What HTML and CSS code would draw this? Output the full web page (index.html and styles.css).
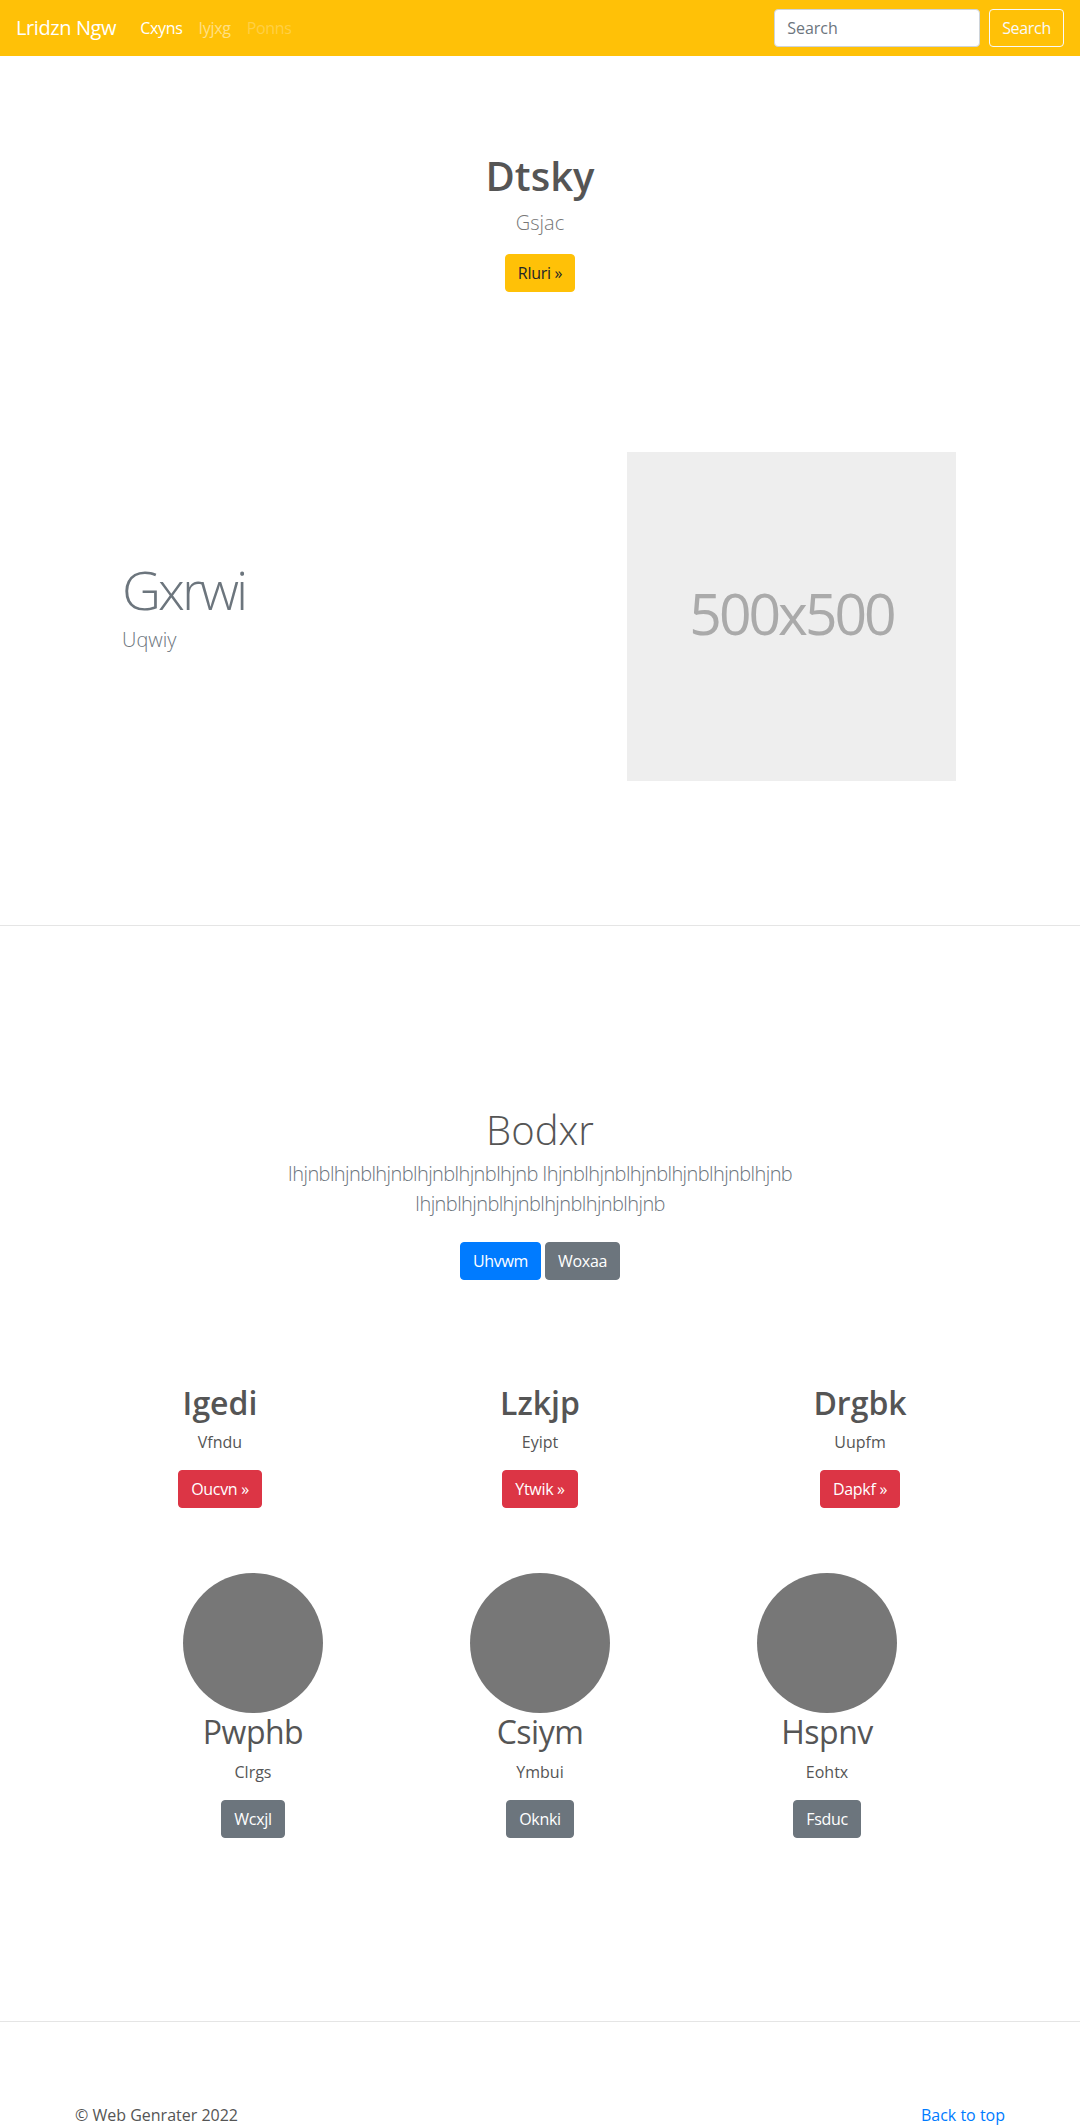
FILE: index.html
```html
<!DOCTYPE html>
<html lang="en">
<head>
<meta charset="utf-8">
<title>Lridzn Ngw</title>
<link rel="stylesheet" href="styles.css">
</head>
<body>
<nav class="navbar">
  <a class="brand" href="#">Lridzn Ngw</a>
  <ul class="nav">
    <li><a class="nav-link active" href="#">Cxyns</a></li>
    <li><a class="nav-link" href="#">Iyjxg</a></li>
    <li><a class="nav-link disabled" href="#">Ponns</a></li>
  </ul>
  <form class="search">
    <input class="search-input" type="text" placeholder="Search">
    <button class="btn btn-outline-light" type="button">Search</button>
  </form>
</nav>

<main>
  <section class="hero">
    <h1 class="hero-title">Dtsky</h1>
    <p class="lead hero-lead">Gsjac</p>
    <div class="actions"><a class="btn btn-warning" href="#">Rluri »</a></div>
  </section>

  <section class="feature">
    <div class="feature-text">
      <h1 class="display">Gxrwi</h1>
      <p class="lead muted feature-lead">Uqwiy</p>
    </div>
    <div class="placeholder">500x500</div>
  </section>

  <hr class="divider">

  <section class="jumbo">
    <h1 class="jumbo-title">Bodxr</h1>
    <p class="lead muted jumbo-lead">Ihjnblhjnblhjnblhjnblhjnblhjnb Ihjnblhjnblhjnblhjnblhjnblhjnb Ihjnblhjnblhjnblhjnblhjnblhjnb</p>
    <div class="actions">
      <a class="btn btn-primary" href="#">Uhvwm</a>
      <a class="btn btn-secondary" href="#">Woxaa</a>
    </div>
  </section>

  <section class="cards">
    <div class="card">
      <h2 class="card-title">Igedi</h2>
      <p>Vfndu</p>
      <div class="actions"><a class="btn btn-danger" href="#">Oucvn »</a></div>
    </div>
    <div class="card">
      <h2 class="card-title">Lzkjp</h2>
      <p>Eyipt</p>
      <div class="actions"><a class="btn btn-danger" href="#">Ytwik »</a></div>
    </div>
    <div class="card">
      <h2 class="card-title">Drgbk</h2>
      <p>Uupfm</p>
      <div class="actions"><a class="btn btn-danger" href="#">Dapkf »</a></div>
    </div>
  </section>

  <section class="team">
    <div class="member">
      <div class="avatar"></div>
      <h2 class="member-name">Pwphb</h2>
      <p>Clrgs</p>
      <div class="actions"><a class="btn btn-secondary" href="#">Wcxjl</a></div>
    </div>
    <div class="member">
      <div class="avatar"></div>
      <h2 class="member-name">Csiym</h2>
      <p>Ymbui</p>
      <div class="actions"><a class="btn btn-secondary" href="#">Oknki</a></div>
    </div>
    <div class="member">
      <div class="avatar"></div>
      <h2 class="member-name">Hspnv</h2>
      <p>Eohtx</p>
      <div class="actions"><a class="btn btn-secondary" href="#">Fsduc</a></div>
    </div>
  </section>
</main>

<footer class="footer">
  <p class="copy">© Web Genrater 2022</p>
  <p><a class="top-link" href="#">Back to top</a></p>
</footer>
</body>
</html>
```

FILE: styles.css
```css
* { box-sizing: border-box; }
html, body { margin: 0; padding: 0; }
body {
  font-family: "Open Sans", "Noto Sans", sans-serif;
  font-size: 16px;
  line-height: 1.5;
  color: #555;
  background: #fff;
}
h1, h2, p { margin: 0; }
a { text-decoration: none; }

/* Navbar */
.navbar {
  display: flex;
  align-items: center;
  height: 56px;
  padding: 8px 16px;
  background: #ffc107;
}
.brand {
  font-size: 20px;
  line-height: 30px;
  padding: 5px 0;
  margin-right: 16px;
  color: #fff;
  letter-spacing: -0.4px;
}
.nav { display: flex; list-style: none; margin: 0; padding: 0; }
.nav-link { display: block; padding: 8px; color: rgba(255,255,255,.5); letter-spacing: -0.3px; }
.nav-link.active { color: #fff; }
.nav-link.disabled { color: rgba(255,255,255,.25); }
.search { margin-left: auto; display: flex; align-items: center; }
.search-input {
  width: 206px;
  height: 38px;
  padding: 6px 12px;
  font-family: inherit;
  font-size: 16px;
  color: #495057;
  background: #fff;
  border: 1px solid #ced4da;
  border-radius: 4px;
  margin-right: 9px;
}
.search-input::placeholder { color: #6c757d; }

/* Buttons */
.btn {
  display: inline-block;
  font-family: inherit;
  font-size: 16px;
  line-height: 24px;
  padding: 6px 12px;
  border: 1px solid transparent;
  border-radius: 4px;
  color: #fff;
  cursor: pointer;
  letter-spacing: -0.3px;
}
.btn-outline-light { background: transparent; border-color: #f8f9fa; color: #f8f9fa; }
.btn-warning { background: #ffc107; border-color: #ffc107; color: #212529; }
.btn-primary { background: #007bff; border-color: #007bff; }
.btn-secondary { background: #6c757d; border-color: #6c757d; }
.btn-danger { background: #dc3545; border-color: #dc3545; }
.actions { display: flex; justify-content: center; gap: 4px; }

.lead { font-size: 20px; line-height: 30px; font-weight: 300; }
.muted { color: #6c757d; }

/* Hero */
.hero { padding-top: 96px; text-align: center; }
.hero-title {
  font-size: 40px;
  line-height: 48px;
  font-weight: 600;
  color: #555;
  margin-bottom: 8px;
}
.hero-lead { color: #777; margin-bottom: 16px; }

/* Feature */
.feature {
  display: flex;
  align-items: center;
  margin-top: 160px;
  padding-left: 122px;
  padding-right: 124px;
}
.feature-text { flex: 1; padding-bottom: 23px; }
.feature-lead { margin-top: 3px; }
.display { font-size: 54px; line-height: 66px; font-weight: 300; color: #6c757d; letter-spacing: -3px; }
.placeholder {
  width: 329px;
  height: 329px;
  background: #eee;
  color: #aaa;
  display: flex;
  align-items: center;
  justify-content: center;
  font-size: 57px;
  letter-spacing: -3px;
  padding-bottom: 6px;
}

.divider { margin: 144px 0 0; border: 0; border-top: 1px solid #e5e5e5; height: 0; }

/* Jumbo */
.jumbo {
  padding: 180px 15px 0;
  text-align: center;
  max-width: 640px;
  margin: 0 auto;
}
.jumbo-title { font-size: 40px; line-height: 48px; font-weight: 300; color: #555; margin-bottom: 5px; }
.jumbo-lead { margin-bottom: 23px; letter-spacing: -0.6px; }

/* Cards */
.cards {
  display: grid;
  grid-template-columns: repeat(3, 320px);
  justify-content: center;
  margin-top: 104px;
  text-align: center;
}
.card-title { font-size: 32px; line-height: 38.4px; font-weight: 600; color: #555; margin-bottom: 8px; }
.card p, .member p { margin-bottom: 16px; }

/* Team */
.team {
  display: grid;
  grid-template-columns: repeat(3, 287px);
  justify-content: center;
  margin-top: 65px;
  text-align: center;
}
.avatar { width: 140px; height: 140px; border-radius: 50%; background: #777; margin: 0 auto; }
.member-name { font-size: 32px; line-height: 38.4px; font-weight: 400; color: #555; margin-bottom: 8px; letter-spacing: -0.5px; }

/* Footer */
.footer {
  margin-top: 183px;
  border-top: 1px solid #e5e5e5;
  padding: 81px 75px 48px;
  display: flex;
  justify-content: space-between;
  color: #555;
}
.top-link { color: #007bff; }
```
